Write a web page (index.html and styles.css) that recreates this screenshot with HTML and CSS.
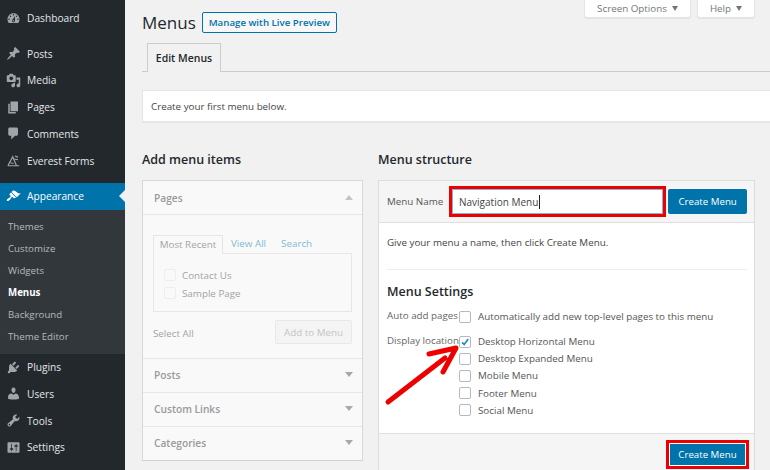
FILE: index.html
```html
<!DOCTYPE html>
<html lang="en">
<head>
    <meta charset="UTF-8">
    <title>Menus</title>
    <link rel="stylesheet" href="styles.css">
</head>
<body>
    <nav class="sidebar">
        <a class="nav-item nav-first"><svg viewBox="0 0 20 20"><path d="M3.76 16h12.48c1.1-1.37 1.76-3.11 1.76-5 0-4.42-3.58-8-8-8s-8 3.58-8 8c0 1.89.66 3.63 1.76 5zM10 4c.55 0 1 .45 1 1s-.45 1-1 1-1-.45-1-1 .45-1 1-1zM6 6c.55 0 1 .45 1 1s-.45 1-1 1-1-.45-1-1 .45-1 1-1zm8 0c.55 0 1 .45 1 1s-.45 1-1 1-1-.45-1-1 .45-1 1-1zm-5.37 5.55L12 7v6c0 1.1-.9 2-2 2s-2-.9-2-2c0-.57.24-1.08.63-1.45zM4 10c.55 0 1 .45 1 1s-.45 1-1 1-1-.45-1-1 .45-1 1-1zm12 0c.55 0 1 .45 1 1s-.45 1-1 1-1-.45-1-1 .45-1 1-1zm-5 3c0-.55-.45-1-1-1s-1 .45-1 1 .45 1 1 1 1-.45 1-1z"/></svg>Dashboard</a>
        <a class="nav-item nav-gap"><svg viewBox="0 0 20 20"><path d="M10.44 3.02l1.82-1.82 6.36 6.35-1.83 1.82c-1.05-.68-2.48-.57-3.41.36l-.75.75c-.92.93-1.04 2.35-.35 3.41l-1.83 1.82-2.41-2.41-2.8 2.79c-.42.42-3.38 2.71-3.8 2.29s1.86-3.39 2.28-3.81l2.79-2.79L4.1 9.36l1.83-1.82c1.05.69 2.48.57 3.41-.36l.75-.75c.93-.92 1.05-2.35.35-3.41z"/></svg>Posts</a>
        <a class="nav-item"><svg viewBox="0 0 20 20"><path fill-rule="evenodd" d="M13 11V4c0-.55-.45-1-1-1h-1.67L9 1H5L3.67 3H2c-.55 0-1 .45-1 1v7c0 .55.45 1 1 1h10c.55 0 1-.45 1-1zM7 4.5c1.38 0 2.5 1.12 2.5 2.5S8.38 9.5 7 9.5 4.5 8.38 4.5 7 5.62 4.5 7 4.5zM14 6h5v10.5c0 1.38-1.12 2.5-2.5 2.5S14 17.88 14 16.5s1.12-2.5 2.5-2.5c.17 0 .34.02.5.05V9h-3V6zm-4 8.05V13h2v3.5c0 1.38-1.12 2.5-2.5 2.5S7 17.88 7 16.5 8.12 14 9.5 14c.17 0 .34.02.5.05z"/></svg>Media</a>
        <a class="nav-item"><svg viewBox="0 0 20 20"><path d="M6 15V2h10v13H6zm-1 1h8v2H3V5h2v11z"/></svg>Pages</a>
        <a class="nav-item"><svg viewBox="0 0 20 20"><path d="M5 2h9c1.1 0 2 .9 2 2v7c0 1.1-.9 2-2 2h-2l-5 5v-5H5c-1.1 0-2-.9-2-2V4c0-1.1.9-2 2-2z"/></svg>Comments</a>
        <a class="nav-item"><svg viewBox="0 0 20 20"><path class="outline" d="M2.5 17h15M2.5 17L9 5l5 12M6 13l4 1M12 4l4 1.5M11.5 8l4.5 1"/></svg>Everest Forms</a>
        <a class="nav-item nav-current"><svg viewBox="0 0 20 20"><path d="M14.48 11.06L7.41 3.99l1.5-1.5c.5-.56 2.3-.47 3.51.32 1.21.8 1.43 1.28 2.91 2.1 1.18.64 2.45 1.26 4.45.85zm-.71.71L6.7 4.7 4.93 6.47c-.39.39-.39 1.02 0 1.41l1.06 1.06c.39.39.39 1.03 0 1.42-.6.6-1.43 1.11-2.21 1.69-.35.26-.7.53-1.01.84C1.43 13.23.4 14.98 1.2 15.78c.79.8 2.55-.23 3.89-1.57.31-.31.58-.66.84-1.01.58-.78 1.09-1.61 1.69-2.21.39-.39 1.02-.39 1.41 0l1.06 1.06c.39.39 1.02.39 1.41 0z"/></svg>Appearance</a>
        <div class="submenu">
            <a>Themes</a>
            <a>Customize</a>
            <a>Widgets</a>
            <a class="sub-current">Menus</a>
            <a>Background</a>
            <a>Theme Editor</a>
        </div>
        <a class="nav-item"><svg viewBox="0 0 20 20"><path d="M13.11 4.36L9.87 7.6 8 5.73l3.24-3.24c.35-.34 1.05-.2 1.56.32.52.51.66 1.21.31 1.55zm-8 1.77l.91-1.12 9.01 9.01-1.19.84c-.71.71-2.63 1.16-3.82 1.16H6.14L4.9 17.26c-.59.59-1.54.59-2.12 0-.59-.58-.59-1.53 0-2.12l1.24-1.24v-3.88c0-1.13.4-3.19 1.09-3.89zm7.26 3.97l3.24-3.24c.34-.35 1.04-.21 1.55.31.52.51.66 1.21.31 1.55l-3.24 3.25z"/></svg>Plugins</a>
        <a class="nav-item"><svg viewBox="0 0 20 20"><path d="M10 9.25c-2.27 0-2.73-3.44-2.73-3.44C7 4.02 7.82 2 9.97 2c2.16 0 2.98 2.02 2.71 3.81 0 0-.41 3.44-2.68 3.44zm0 2.57L12.72 10c2.39 0 4.52 2.33 4.52 4.53v2.49s-3.65 1.13-7.24 1.13c-3.65 0-7.24-1.13-7.24-1.13v-2.49c0-2.25 1.94-4.48 4.47-4.48z"/></svg>Users</a>
        <a class="nav-item"><svg viewBox="0 0 20 20"><path fill-rule="evenodd" d="M16.68 9.77c-1.34 1.34-3.3 1.67-4.95.99l-5.41 6.52c-.99.99-2.59.99-3.58 0s-.99-2.59 0-3.57l6.52-5.42c-.68-1.65-.35-3.61.99-4.95 1.28-1.28 3.12-1.62 4.72-1.06l-2.89 2.89 2.82 2.82 2.86-2.87c.53 1.58.18 3.39-1.08 4.65zM3.81 16.21c.4.39 1.04.39 1.43 0 .4-.4.4-1.04 0-1.43-.39-.4-1.03-.4-1.43 0-.39.39-.39 1.03 0 1.43z"/></svg>Tools</a>
        <a class="nav-item"><svg viewBox="0 0 20 20"><path fill-rule="evenodd" d="M18 16V4c0-.55-.45-1-1-1H3c-.55 0-1 .45-1 1v12c0 .55.45 1 1 1h14c.55 0 1-.45 1-1zM8 11h1c.55 0 1 .45 1 1s-.45 1-1 1H8v1.5c0 .28-.22.5-.5.5s-.5-.22-.5-.5V13H6c-.55 0-1-.45-1-1s.45-1 1-1h1V5.5c0-.28.22-.5.5-.5s.5.22.5.5V11zm5-2h-1c-.55 0-1-.45-1-1s.45-1 1-1h1V5.5c0-.28.22-.5.5-.5s.5.22.5.5V7h1c.55 0 1 .45 1 1s-.45 1-1 1h-1v5.5c0 .28-.22.5-.5.5s-.5-.22-.5-.5V9z"/></svg>Settings</a>
    </nav>

    <main class="content">
        <div class="screen-tabs">
            <button class="screen-tab screen-options">Screen Options<span class="caret-down"></span></button>
            <button class="screen-tab screen-help">Help<span class="caret-down"></span></button>
        </div>

        <div class="page-title">
            <h1>Menus</h1>
            <a class="title-action">Manage with Live Preview</a>
        </div>

        <div class="tab-line">
            <span class="tab-active">Edit Menus</span>
        </div>

        <div class="notice">Create your first menu below.</div>

        <div class="columns">
            <section class="col-left">
                <h2>Add menu items</h2>
                <div class="accordion">
                    <div class="acc-title">Pages<span class="caret-up"></span></div>
                    <div class="acc-body">
                        <div class="mini-tabs">
                            <span class="mini-tab-active">Most Recent</span>
                            <a>View All</a>
                            <a>Search</a>
                        </div>
                        <div class="mini-panel">
                            <div class="mini-row"><span class="box"></span>Contact Us</div>
                            <div class="mini-row"><span class="box"></span>Sample Page</div>
                        </div>
                        <div class="acc-actions">
                            <span class="select-all">Select All</span>
                            <span class="add-btn">Add to Menu</span>
                        </div>
                    </div>
                    <div class="acc-title">Posts<span class="caret-down"></span></div>
                    <div class="acc-title">Custom Links<span class="caret-down"></span></div>
                    <div class="acc-title acc-last">Categories<span class="caret-down"></span></div>
                </div>
            </section>

            <section class="col-right">
                <h2>Menu structure</h2>
                <div class="menu-box">
                    <div class="menu-head">
                        <span class="name-label">Menu Name</span>
                        <div class="red-frame name-frame">
                            <div class="name-input"><span class="typed">Navigation Menu</span></div>
                        </div>
                        <a class="primary-btn">Create Menu</a>
                    </div>
                    <div class="menu-body">
                        <p class="hint">Give your menu a name, then click Create Menu.</p>
                        <h3>Menu Settings</h3>
                        <div class="setting setting-auto">
                            <span class="setting-label">Auto add pages</span>
                            <div class="setting-options">
                                <div class="option"><span class="box"></span>Automatically add new top-level pages to this menu</div>
                            </div>
                        </div>
                        <div class="setting">
                            <span class="setting-label">Display location</span>
                            <div class="setting-options">
                                <div class="option"><span class="box"><svg viewBox="0 0 12 12"><path d="M2.5 6.5l2.5 2.5 4.8-6.5"/></svg></span>Desktop Horizontal Menu</div>
                                <div class="option"><span class="box"></span>Desktop Expanded Menu</div>
                                <div class="option"><span class="box"></span>Mobile Menu</div>
                                <div class="option"><span class="box"></span>Footer Menu</div>
                                <div class="option"><span class="box"></span>Social Menu</div>
                            </div>
                        </div>
                    </div>
                    <div class="menu-foot">
                        <div class="red-frame foot-frame"><a class="primary-btn">Create Menu</a></div>
                    </div>
                </div>
                <svg class="arrow" viewBox="0 0 80 70"><path d="M5 59L62 15M46 11L73 5L60 29"/></svg>
            </section>
        </div>
    </main>
</body>
</html>
```

FILE: styles.css
```css
* {
    box-sizing: border-box;
}

html, body {
    height: 470px;
    overflow: hidden;
}

body {
    margin: 0;
    display: flex;
    font-family: "Open Sans", "Noto Sans", sans-serif;
    font-size: 9.8px;
    color: #444;
    background-color: #f1f1f1;
}

/* sidebar */
.sidebar {
    width: 125px;
    flex-shrink: 0;
    background-color: #23282d;
    color: #eee;
}

.nav-item {
    display: flex;
    align-items: center;
    height: 26.75px;
    padding-left: 6px;
    font-size: 10.2px;
    color: #e4e6e8;
}

.nav-item svg {
    width: 15px;
    height: 15px;
    margin-right: 6px;
    fill: #a0a5aa;
    flex-shrink: 0;
}

.nav-item svg .outline {
    fill: none;
    stroke: #a0a5aa;
    stroke-width: 1.6;
}

.nav-first {
    margin-top: 5px;
}

.nav-gap {
    margin-top: 8.5px;
}

.nav-current {
    position: relative;
    margin-top: 9px;
    background-color: #0073aa;
    color: #fff;
}

.nav-current svg {
    fill: #fff;
}

.nav-current::after {
    content: "";
    position: absolute;
    right: 0;
    top: 7px;
    border: 6px solid transparent;
    border-right-color: #f1f1f1;
    border-left-width: 0;
}

.submenu {
    display: flex;
    flex-direction: column;
    padding: 6px 0;
    background-color: #32373c;
}

.submenu a {
    display: flex;
    align-items: center;
    height: 22px;
    padding-left: 8px;
    font-size: 9.7px;
    color: #b4b9be;
}

.submenu .sub-current {
    font-weight: 700;
    color: #fff;
}

/* main */
.content {
    flex: 1;
    min-width: 0;
    padding: 0 0 0 17px;
}

.screen-tabs {
    display: flex;
    justify-content: flex-end;
    gap: 6px;
    height: 0;
    padding-right: 15px;
}

.screen-tab {
    display: flex;
    align-items: center;
    justify-content: center;
    height: 18px;
    padding: 0;
    font-family: inherit;
    font-size: 9.8px;
    color: #72777c;
    background-color: #fff;
    border: 1px solid #e5e5e5;
    border-top: none;
    border-radius: 0 0 3px 3px;
    box-shadow: 0 1px 1px rgba(0, 0, 0, 0.06);
}

.screen-options {
    width: 107px;
}

.screen-help {
    width: 58px;
}

.caret-down,
.caret-up {
    display: inline-block;
    border-left: 4px solid transparent;
    border-right: 4px solid transparent;
}

.caret-down {
    border-top: 5px solid #72777c;
}

.caret-up {
    border-bottom: 5px solid #a0a5aa;
}

.screen-tab .caret-down {
    margin-left: 5px;
    border-left-width: 3.5px;
    border-right-width: 3.5px;
}

.page-title {
    display: flex;
    align-items: center;
    gap: 6px;
    height: 45px;
}

h1 {
    margin: 0;
    font-size: 17px;
    font-weight: 400;
    color: #23282d;
}

.title-action {
    display: flex;
    align-items: center;
    justify-content: center;
    width: 135px;
    height: 21px;
    font-size: 9.7px;
    font-weight: 600;
    color: #0073aa;
    background-color: #f7f7f7;
    border: 1px solid #0073aa;
    border-radius: 2px;
}

.tab-line {
    height: 29px;
    margin-top: -2px;
    padding-left: 5px;
    border-bottom: 1px solid #ccc;
}

.tab-active {
    display: flex;
    align-items: center;
    justify-content: center;
    width: 74px;
    height: 29px;
    font-size: 10.5px;
    font-weight: 600;
    color: #23282d;
    background-color: #f1f1f1;
    border: 1px solid #ccc;
    border-bottom: none;
}

.notice {
    display: flex;
    align-items: center;
    height: 32px;
    margin-top: 18px;
    padding-left: 8px;
    color: #444;
    background-color: #fff;
    border: 1px solid #e5e5e5;
    border-right: none;
    box-shadow: 0 1px 1px rgba(0, 0, 0, 0.04);
}

.columns {
    display: flex;
    gap: 15px;
    margin-top: 28px;
}

h2 {
    margin: 0 0 10px;
    height: 20px;
    line-height: 20px;
    font-size: 12.5px;
    font-weight: 600;
    color: #23282d;
}

.col-left {
    width: 221px;
    flex-shrink: 0;
}

.col-right {
    position: relative;
    width: 378px;
    flex-shrink: 0;
}

/* left column, faded until a menu exists */
.accordion {
    background-color: #f9f9f9;
    border: 1px solid #d8d8d8;
    border-bottom: 1px solid #cfcfcf;
    color: #999;
}

.acc-title {
    display: flex;
    align-items: center;
    justify-content: space-between;
    height: 34px;
    padding: 0 9px 0 11px;
    font-size: 10.2px;
    font-weight: 600;
    color: #9a9a9a;
    border-bottom: 1px solid #e6e6e6;
}

.acc-body ~ .acc-title {
    padding-bottom: 2px;
}

.acc-last {
    height: 33px;
    border-bottom: none;
}

.acc-title .caret-down {
    border-top-color: #a8a8a8;
}

.acc-title .caret-up {
    border-bottom-color: #c4c4c4;
}

.acc-body {
    height: 144px;
    padding: 19px 10px 0;
    border-bottom: 1px solid #e6e6e6;
}

.mini-tabs {
    display: flex;
    align-items: center;
    gap: 15px;
    height: 19px;
}

.mini-tabs a {
    color: #7fb9d4;
}

.mini-tab-active {
    display: flex;
    align-items: center;
    justify-content: center;
    width: 70px;
    height: 19px;
    margin-bottom: -1px;
    margin-right: -7px;
    white-space: nowrap;
    color: #a4a4a4;
    background-color: #f9f9f9;
    border: 1px solid #e6e6e6;
    border-bottom: none;
}

.mini-panel {
    height: 59px;
    padding: 12px 10px 0;
    border: 1px solid #e6e6e6;
}

.mini-row {
    display: flex;
    align-items: center;
    gap: 6px;
    height: 18px;
    color: #a4a4a4;
}

.mini-row .box {
    border-color: #eee;
    background-color: #f9f9f9;
}

.acc-actions {
    display: flex;
    justify-content: space-between;
    align-items: center;
    margin-top: 8px;
}

.select-all {
    margin-top: 3px;
    color: #a4a4a4;
}

.add-btn {
    display: flex;
    align-items: center;
    justify-content: center;
    width: 77px;
    height: 24px;
    color: #c4c4c4;
    background-color: #f4f4f4;
    border: 1px solid #e8e8e8;
    border-radius: 2px;
}

/* right column */
.menu-box {
    width: 377px;
    background-color: #fff;
    border: 1px solid #dcdcdc;
    border-bottom: none;
}

.menu-head {
    display: flex;
    align-items: center;
    height: 42px;
    padding: 0 7px 0 8px;
    background-color: #f5f5f5;
    border-bottom: 1px solid #dfdfdf;
}

.name-label {
    width: 62px;
    flex-shrink: 0;
    margin-top: -1px;
    color: #555;
}

.red-frame {
    border: 3px solid #ee0000;
    background-color: #fff;
}

.name-frame {
    width: 218px;
    height: 31px;
    margin-right: 2px;
}

.name-input {
    display: flex;
    align-items: center;
    height: 100%;
    padding-left: 6px;
    font-size: 10px;
    border: 1px solid #7cb5d6;
}

.typed {
    padding-right: 1px;
    border-right: 1px solid #222;
}

.primary-btn {
    display: flex;
    align-items: center;
    justify-content: center;
    width: 79px;
    height: 25px;
    font-size: 9.7px;
    color: #fff;
    background-color: #0073aa;
    border-radius: 2px;
}

.menu-body {
    height: 210px;
    padding: 0 7px 0 8px;
}

.hint {
    height: 47px;
    margin: 0;
    padding-top: 12px;
    line-height: 15px;
    border-bottom: 1px solid #eee;
}

h3 {
    margin: 13px 0 7px;
    height: 18px;
    line-height: 18px;
    font-size: 12.5px;
    font-weight: 600;
    color: #23282d;
}

.setting {
    display: flex;
    margin-top: 7px;
}

.setting-auto {
    margin-top: 0;
    height: 18px;
}

.setting-label {
    width: 72px;
    flex-shrink: 0;
    color: #666;
    white-space: nowrap;
    line-height: 16px;
}

.option {
    display: flex;
    align-items: center;
    gap: 7px;
    height: 17.2px;
    white-space: nowrap;
    color: #555;
}

.box {
    display: flex;
    align-items: center;
    justify-content: center;
    width: 12px;
    height: 12px;
    flex-shrink: 0;
    background-color: #fff;
    border: 1px solid #b4b9be;
    border-radius: 2px;
}

.box svg {
    width: 12px;
    height: 12px;
    fill: none;
    stroke: #1e8cbe;
    stroke-width: 2;
}

.menu-foot {
    display: flex;
    justify-content: flex-end;
    height: 37px;
    padding: 6px 5px 0 0;
    background-color: #f5f5f5;
    border-top: 1px solid #dfdfdf;
}

.foot-frame {
    display: flex;
    width: 83px;
    height: 29px;
    padding: 1px;
    border-width: 3px;
}

.foot-frame .primary-btn {
    width: 100%;
    height: 100%;
    border-radius: 0;
}

/* annotation drawn over the settings */
.arrow {
    position: absolute;
    left: 5px;
    top: 193px;
    width: 80px;
    height: 70px;
}

.arrow path {
    fill: none;
    stroke: #ee0000;
    stroke-width: 5;
    stroke-linecap: round;
    stroke-linejoin: round;
}
```
